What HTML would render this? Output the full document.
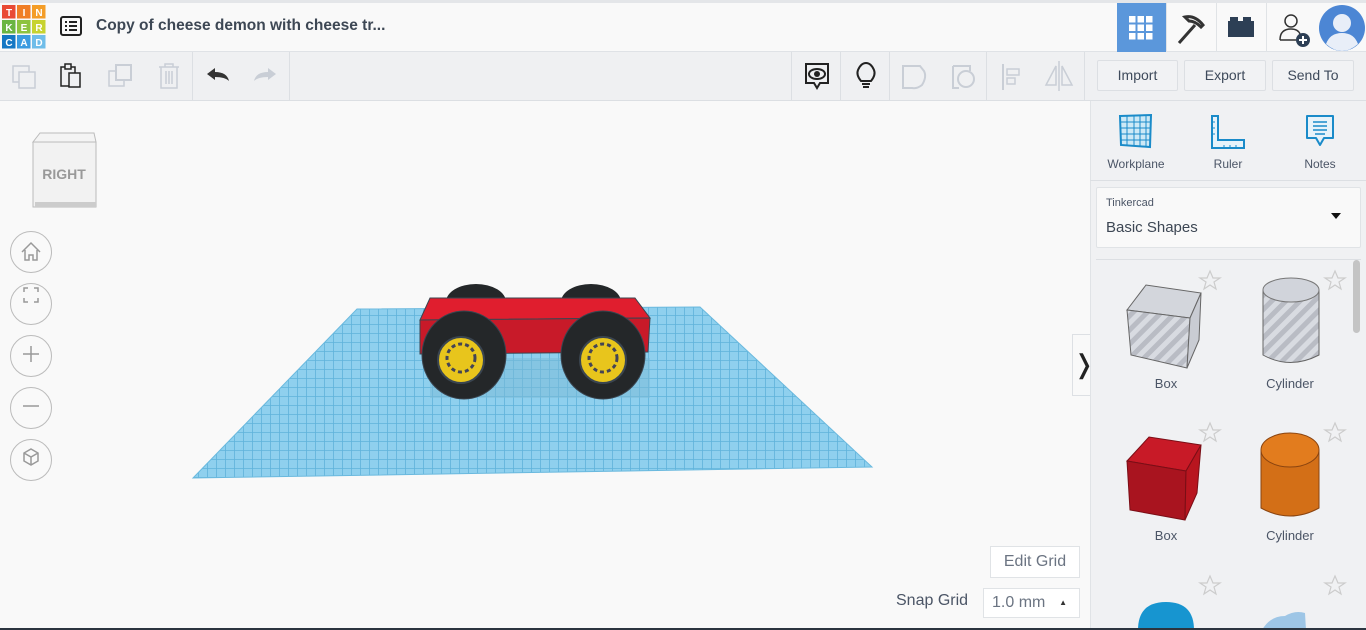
<!DOCTYPE html>
<html><head><meta charset="utf-8"><style>
*{box-sizing:border-box;margin:0;padding:0}
body{width:1366px;height:630px;overflow:hidden;background:#f9f9f9;font-family:"Liberation Sans",sans-serif;position:relative}
.abs{position:absolute}
.top{left:0;top:0;width:1366px;height:52px;background:#f9f9f9;border-top:3px solid #e4e6e9;border-bottom:1px solid #dfe2e6}
.bar2{left:0;top:52px;width:1366px;height:49px;background:#eff0f2;border-bottom:1px solid #dcdfe3}
.sep{width:1px;background:#dcdfe3;top:52px;height:48px}
.btn{top:60px;height:31px;border:1px solid #dcdfe3;border-radius:2px;background:#f1f2f4;color:#3e4a5b;font-size:14px;text-align:center;line-height:29px}
.side{left:1090px;top:101px;width:276px;height:529px;background:#f0f1f3;border-left:1px solid #e0e3e6}
.lbl{font-size:12px;color:#4b5566;text-align:center}
.circ{left:10px;width:42px;height:42px;border:1px solid #bbb;border-radius:50%}
</style></head><body>
<div class="abs top"></div>
<svg class="abs" style="left:2px;top:5px" width="44" height="44" viewBox="0 0 44 44">
<rect x="0" y="0" width="13.5" height="13.5" fill="#e94a35"/><rect x="15" y="0" width="13.5" height="13.5" fill="#f07e26"/><rect x="30" y="0" width="13.5" height="13.5" fill="#f49d27"/>
<rect x="0" y="15" width="13.5" height="13.5" fill="#6ab542"/><rect x="15" y="15" width="13.5" height="13.5" fill="#8dc340"/><rect x="30" y="15" width="13.5" height="13.5" fill="#c7d32f"/>
<rect x="0" y="30" width="13.5" height="13.5" fill="#1477c4"/><rect x="15" y="30" width="13.5" height="13.5" fill="#3a9be0"/><rect x="30" y="30" width="13.5" height="13.5" fill="#6fbde9"/>
<g fill="#fff" font-size="10" font-weight="bold" text-anchor="middle" font-family="Liberation Sans">
<text x="7" y="11">T</text><text x="22" y="11">I</text><text x="37" y="11">N</text>
<text x="7" y="26">K</text><text x="22" y="26">E</text><text x="37" y="26">R</text>
<text x="7" y="41">C</text><text x="22" y="41">A</text><text x="37" y="41">D</text></g></svg>
<svg class="abs" style="left:60px;top:16px" width="22" height="20" viewBox="0 0 22 20"><rect x="1" y="1" width="20" height="18" rx="2" fill="none" stroke="#222" stroke-width="2"/><g stroke="#222" stroke-width="2"><line x1="5" y1="6" x2="7" y2="6"/><line x1="9" y1="6" x2="17" y2="6"/><line x1="5" y1="10" x2="7" y2="10"/><line x1="9" y1="10" x2="17" y2="10"/><line x1="5" y1="14" x2="7" y2="14"/><line x1="9" y1="14" x2="17" y2="14"/></g></svg>
<div class="abs" style="left:96px;top:17px;font-size:15.5px;font-weight:bold;color:#3d4754">Copy of cheese demon with cheese tr...</div>
<div class="abs" style="left:1117px;top:3px;width:49px;height:49px;background:#5b97db"></div>
<svg class="abs" style="left:1129px;top:16px" width="24" height="24"><g fill="#fff"><rect x="0" y="0" width="6.5" height="6.5"/><rect x="8.5" y="0" width="6.5" height="6.5"/><rect x="17" y="0" width="6.5" height="6.5"/><rect x="0" y="8.5" width="6.5" height="6.5"/><rect x="8.5" y="8.5" width="6.5" height="6.5"/><rect x="17" y="8.5" width="6.5" height="6.5"/><rect x="0" y="17" width="6.5" height="6.5"/><rect x="8.5" y="17" width="6.5" height="6.5"/><rect x="17" y="17" width="6.5" height="6.5"/></g></svg>
<div class="abs" style="left:1166px;top:3px;width:1px;height:49px;background:#e0e3e6"></div>
<svg class="abs" style="left:1175px;top:13px" width="32" height="32" viewBox="0 0 32 32"><path d="M4 30 L20 12 M10 4 Q20 2 28 12 L26 14 Q20 8 14 8 Z" stroke="#333" stroke-width="3" fill="none"/></svg>
<div class="abs" style="left:1216px;top:3px;width:1px;height:49px;background:#e0e3e6"></div>
<svg class="abs" style="left:1228px;top:17px" width="26" height="20"><rect x="0" y="4" width="26" height="16" fill="#2d3f55"/><rect x="2" y="0" width="8" height="6" fill="#2d3f55"/><rect x="15" y="0" width="8" height="6" fill="#2d3f55"/></svg>
<div class="abs" style="left:1266px;top:3px;width:1px;height:49px;background:#e0e3e6"></div>
<svg class="abs" style="left:1278px;top:12px" width="36" height="36" viewBox="0 0 36 36"><circle cx="13" cy="9" r="6" fill="none" stroke="#333" stroke-width="1.5"/><path d="M2 28 Q2 17 13 17 Q20 17 22 22 M2 28 H18" fill="none" stroke="#333" stroke-width="1.5"/><circle cx="25" cy="28" r="7" fill="#2d3f55"/><path d="M25 24 V32 M21 28 H29" stroke="#fff" stroke-width="2"/></svg>
<svg class="abs" style="left:1318px;top:4px" width="48" height="48" viewBox="0 0 48 48"><circle cx="24" cy="24" r="23" fill="#4c86d4"/><circle cx="24" cy="19" r="9" fill="#e8eef8"/><path d="M8 40 Q12 29 24 29 Q36 29 40 40 Q32 47 24 47 Q16 47 8 40Z" fill="#e8eef8"/></svg>
<div class="abs bar2"></div>
<div class="abs sep" style="left:192px"></div><div class="abs sep" style="left:289px"></div>
<div class="abs sep" style="left:791px"></div><div class="abs sep" style="left:840px"></div><div class="abs sep" style="left:889px"></div><div class="abs sep" style="left:986px"></div><div class="abs sep" style="left:1084px"></div>
<svg class="abs" style="left:10px;top:63px" width="28" height="28"><rect x="3" y="3" width="16" height="16" fill="none" stroke="#c9ced6" stroke-width="1.5"/><rect x="9" y="9" width="16" height="16" fill="#eff0f2" stroke="#c9ced6" stroke-width="1.5"/></svg>
<svg class="abs" style="left:58px;top:62px" width="28" height="28"><rect x="3" y="5" width="14" height="19" fill="none" stroke="#222" stroke-width="1.5"/><rect x="7" y="2" width="6" height="5" fill="#eff0f2" stroke="#222" stroke-width="1.5"/><rect x="11" y="11" width="11" height="14" fill="#eff0f2" stroke="#222" stroke-width="1.5"/></svg>
<svg class="abs" style="left:105px;top:62px" width="30" height="30"><rect x="4" y="9" width="15" height="15" fill="none" stroke="#c9ced6" stroke-width="1.5"/><rect x="11" y="3" width="15" height="15" fill="#eff0f2" stroke="#c9ced6" stroke-width="2"/></svg>
<svg class="abs" style="left:156px;top:61px" width="26" height="30"><path d="M3 6 H23 M9 6 V3 H17 V6 M5 6 V27 H21 V6 M10 10 V23 M13 10 V23 M16 10 V23" fill="none" stroke="#c9ced6" stroke-width="1.5"/></svg>
<svg class="abs" style="left:205px;top:67px" width="26" height="18"><path d="M2 7 L10 1 V5 Q22 5 24 14 Q20 10 10 10 V13 Z" fill="#333"/></svg>
<svg class="abs" style="left:252px;top:67px" width="26" height="18"><path d="M24 7 L16 1 V5 Q4 5 2 14 Q6 10 16 10 V13 Z" fill="#c9ced6"/></svg>
<svg class="abs" style="left:803px;top:61px" width="28" height="32"><path d="M3 3 H25 V22 H17 L14 27 L11 22 H3 Z" fill="none" stroke="#222" stroke-width="2"/><ellipse cx="14" cy="13" rx="8" ry="5" fill="none" stroke="#222" stroke-width="2"/><circle cx="14" cy="13" r="3" fill="#222"/></svg>
<svg class="abs" style="left:854px;top:61px" width="24" height="32"><path d="M7 20 Q2 14 4 9 Q7 2 12 2 Q17 2 20 9 Q22 14 17 20 Z" fill="none" stroke="#222" stroke-width="2"/><path d="M8 23 H16 M9 26 H15" stroke="#222" stroke-width="2"/></svg>
<svg class="abs" style="left:900px;top:63px" width="30" height="28"><path d="M3 3 H20 L24 8 Q27 14 22 22 Q17 26 12 25 H3 Z" fill="none" stroke="#c9ced6" stroke-width="2"/></svg>
<svg class="abs" style="left:950px;top:63px" width="30" height="28"><path d="M3 3 H20 V8 M3 3 V25 H9" fill="none" stroke="#c9ced6" stroke-width="2"/><circle cx="16" cy="16" r="8" fill="none" stroke="#c9ced6" stroke-width="2"/></svg>
<svg class="abs" style="left:1000px;top:62px" width="24" height="30"><path d="M3 2 V28" stroke="#c9ced6" stroke-width="2"/><rect x="7" y="7" width="12" height="6" fill="none" stroke="#c9ced6" stroke-width="1.5"/><rect x="7" y="16" width="8" height="6" fill="none" stroke="#c9ced6" stroke-width="1.5"/></svg>
<svg class="abs" style="left:1043px;top:60px" width="32" height="32"><path d="M16 1 V31" stroke="#c9ced6" stroke-width="1.5"/><path d="M13 6 L3 25 H13 Z M19 6 L29 25 H19 Z" fill="none" stroke="#c9ced6" stroke-width="1.5"/></svg>
<div class="abs btn" style="left:1097px;width:81px">Import</div>
<div class="abs btn" style="left:1184px;width:82px">Export</div>
<div class="abs btn" style="left:1272px;width:82px">Send To</div>
<svg class="abs" style="left:28px;top:130px" width="72" height="80" viewBox="0 0 72 80"><path d="M5 12 L12 3 H66 L68 12 Z" fill="#f4f4f4" stroke="#bbb"/><rect x="5" y="12" width="63" height="65" fill="#f2f2f2" stroke="#bbb"/><rect x="7" y="72" width="61" height="5" fill="#ccc"/><text x="36" y="49" font-size="14" font-weight="bold" fill="#999" text-anchor="middle" font-family="Liberation Sans">RIGHT</text></svg>
<div class="abs circ" style="top:231px"></div><div class="abs circ" style="top:283px"></div><div class="abs circ" style="top:335px"></div><div class="abs circ" style="top:387px"></div><div class="abs circ" style="top:439px"></div>
<svg class="abs" style="left:10px;top:231px" width="42" height="250" fill="none" stroke="#999" stroke-width="1.5">
<path d="M12 21 L21 12 L30 21 M15 19 V29 H19 V24 H23 V29 H27 V19"/>
<path d="M14 61 V57 H18 M24 57 H28 V61 M28 67 V71 H24 M18 71 H14 V67"/>
<path d="M21 115 V131 M13 123 H29"/>
<path d="M13 175 H29"/>
<path d="M21 218 L28 222 V230 L21 234 L14 230 V222 Z M14 222 L21 226 L28 222 M21 226 V234"/></svg>
<svg class="abs" style="left:0;top:0" width="1090" height="630">
<defs><pattern id="g" width="9" height="9" patternUnits="userSpaceOnUse"><rect width="9" height="9" fill="#8fd0ee"/><path d="M0 0.5 H9 M0.5 0 V9" stroke="#5fb3db" stroke-width="0.8"/></pattern></defs>
<polygon points="357,309 700,307 872,467 193,478" fill="url(#g)" stroke="#6ab9de"/>
<rect x="430" y="358" width="220" height="40" fill="#7bb9d6" opacity="0.5"/>
<ellipse cx="476" cy="302" rx="30" ry="18" fill="#242729"/>
<ellipse cx="591" cy="302" rx="30" ry="18" fill="#242729"/>
<polygon points="430,298 635,298 650,318 420,320" fill="#e01e2e" stroke="#3a4550"/>
<polygon points="420,320 650,318 648,352 420,354" fill="#c81a29" stroke="#3a4550"/>
<ellipse cx="464" cy="355" rx="42" ry="44" fill="#242729" stroke="#3a4550"/>
<ellipse cx="603" cy="355" rx="42" ry="44" fill="#242729" stroke="#3a4550"/>
<circle cx="461" cy="360" r="23" fill="#e8c51c" stroke="#3a4550" stroke-width="2"/>
<circle cx="603" cy="360" r="23" fill="#e8c51c" stroke="#3a4550" stroke-width="2"/>
<circle cx="461" cy="358" r="14" fill="none" stroke="#445" stroke-width="3" stroke-dasharray="4 3"/>
<circle cx="603" cy="358" r="14" fill="none" stroke="#445" stroke-width="3" stroke-dasharray="4 3"/>
</svg>
<div class="abs" style="left:1072px;top:334px;width:24px;height:62px;background:#f9f9f9;border:1px solid #dde0e4;font-size:26px;line-height:58px;text-align:center;color:#222">&#x276D;</div>
<div class="abs" style="left:990px;top:546px;width:90px;height:32px;border:1px solid #e0e3e6;background:#fff;color:#6b7482;font-size:16px;text-align:center;line-height:30px">Edit Grid</div>
<div class="abs" style="left:896px;top:592px;font-size:16px;color:#4b5566">Snap Grid</div>
<div class="abs" style="left:983px;top:588px;width:97px;height:30px;border:1px solid #e0e3e6;background:#fff;color:#6b7482;font-size:16px;line-height:28px;padding-left:8px">1.0 mm<span style="position:absolute;right:12px;top:0;font-size:8px;color:#333">▲</span></div>
<div class="abs side"></div>
<div class="abs" style="left:1090px;top:180px;width:276px;height:1px;background:#dcdfe3"></div>
<svg class="abs" style="left:1118px;top:113px" width="36" height="36"><path d="M2 3 L33 2 L32 34 L3 32 Z" fill="#cde9f6" stroke="#1a8bc9" stroke-width="2"/><g stroke="#1a8bc9" stroke-width="1"><path d="M9 3 V33 M16 3 V33 M22 3 V33 M28 3 V33 M2 9 H33 M2 15 H33 M2 21 H33 M2 27 H33"/></g></svg>
<svg class="abs" style="left:1210px;top:114px" width="36" height="36"><path d="M2 2 H8 V26 H34 V34 H2 Z" fill="#e7f3fa" stroke="#1a8bc9" stroke-width="2"/><path d="M2 8 H5 M2 14 H5 M2 20 H5 M14 34 V31 M20 34 V31 M26 34 V31" stroke="#1a8bc9"/></svg>
<svg class="abs" style="left:1304px;top:113px" width="32" height="38"><path d="M3 3 H29 V25 H20 L16 32 L12 25 H3 Z" fill="#e7f3fa" stroke="#1a8bc9" stroke-width="2" stroke-linejoin="round"/><path d="M9 9 H23 M9 13 H23 M9 17 H23 M11 21 H21" stroke="#1a8bc9" stroke-width="1.5"/></svg>
<div class="abs lbl" style="left:1100px;top:157px;width:72px">Workplane</div>
<div class="abs lbl" style="left:1198px;top:157px;width:60px">Ruler</div>
<div class="abs lbl" style="left:1290px;top:157px;width:60px">Notes</div>
<div class="abs" style="left:1096px;top:187px;width:265px;height:61px;background:#f9f9f9;border:1px solid #e0e3e6;border-radius:2px"></div>
<div class="abs" style="left:1106px;top:197px;font-size:11px;color:#4b5566">Tinkercad</div>
<div class="abs" style="left:1106px;top:219px;font-size:15px;color:#3d4754">Basic Shapes</div>
<div class="abs" style="left:1331px;top:213px;width:0;height:0;border-left:5px solid transparent;border-right:5px solid transparent;border-top:6px solid #111"></div>
<div class="abs" style="left:1096px;top:259px;width:265px;height:1px;background:#dcdfe3"></div>
<div class="abs" style="left:1353px;top:260px;width:7px;height:73px;background:#c4c4c4;border-radius:4px"></div>
<svg class="abs" style="left:1090px;top:260px" width="262" height="370">
<defs><pattern id="s" width="10" height="10" patternUnits="userSpaceOnUse" patternTransform="rotate(45)"><rect width="10" height="10" fill="#b9bcc4"/><rect width="5" height="10" fill="#d8dbe1"/></pattern></defs>
<g fill="none" stroke="#ccc" stroke-width="1.2"><path d="M120 11 L123 18 L130 18 L124 22 L126 29 L120 25 L114 29 L116 22 L110 18 L117 18 Z"/><path d="M245 11 L248 18 L255 18 L249 22 L251 29 L245 25 L239 29 L241 22 L235 18 L242 18 Z"/>
<path d="M120 163 L123 170 L130 170 L124 174 L126 181 L120 177 L114 181 L116 174 L110 170 L117 170 Z"/><path d="M245 163 L248 170 L255 170 L249 174 L251 181 L245 177 L239 181 L241 174 L235 170 L242 170 Z"/>
<path d="M120 316 L123 323 L130 323 L124 327 L126 334 L120 330 L114 334 L116 327 L110 323 L117 323 Z"/><path d="M245 316 L248 323 L255 323 L249 327 L251 334 L245 330 L239 334 L241 327 L235 323 L242 323 Z"/></g>
<path d="M37 50 L56 25 L111 33 L100 58 Z" fill="#d3d6dc" stroke="#666"/>
<path d="M37 50 L100 58 L97 108 L41 95 Z" fill="url(#s)" stroke="#666"/>
<path d="M100 58 L111 33 L109 80 L97 108 Z" fill="#c9ccd3" stroke="#666"/>
<path d="M173 30 V95 Q200 110 229 95 V30 Z" fill="url(#s)" stroke="#666"/>
<ellipse cx="201" cy="30" rx="28" ry="12" fill="#d1d4db" stroke="#777"/>
<path d="M37 201 L59 177 L111 185 L96 211 Z" fill="#c81a27" stroke="#7a0e16"/>
<path d="M37 201 L96 211 L95 260 L40 250 Z" fill="#a9141f" stroke="#7a0e16"/>
<path d="M96 211 L111 185 L107 233 L95 260 Z" fill="#b8151f" stroke="#7a0e16"/>
<path d="M171 190 V248 Q200 264 229 248 V190 Z" fill="#d36f17" stroke="#8a4410"/>
<ellipse cx="200" cy="190" rx="29" ry="17" fill="#e27c1e" stroke="#8a4410"/>
<path d="M48 370 Q48 342 76 342 Q104 342 104 370 Z" fill="#1795d0"/>
<path d="M172 370 Q180 356 195 356 Q205 350 215 353 L216 370 Z" fill="#9ec6e6"/>
</svg>
<div class="abs lbl" style="left:1126px;top:376px;width:80px;font-size:13px">Box</div>
<div class="abs lbl" style="left:1250px;top:376px;width:80px;font-size:13px">Cylinder</div>
<div class="abs lbl" style="left:1126px;top:528px;width:80px;font-size:13px">Box</div>
<div class="abs lbl" style="left:1250px;top:528px;width:80px;font-size:13px">Cylinder</div>
<div class="abs" style="left:0;top:628px;width:1366px;height:2px;background:#2c3540"></div>
</body></html>
